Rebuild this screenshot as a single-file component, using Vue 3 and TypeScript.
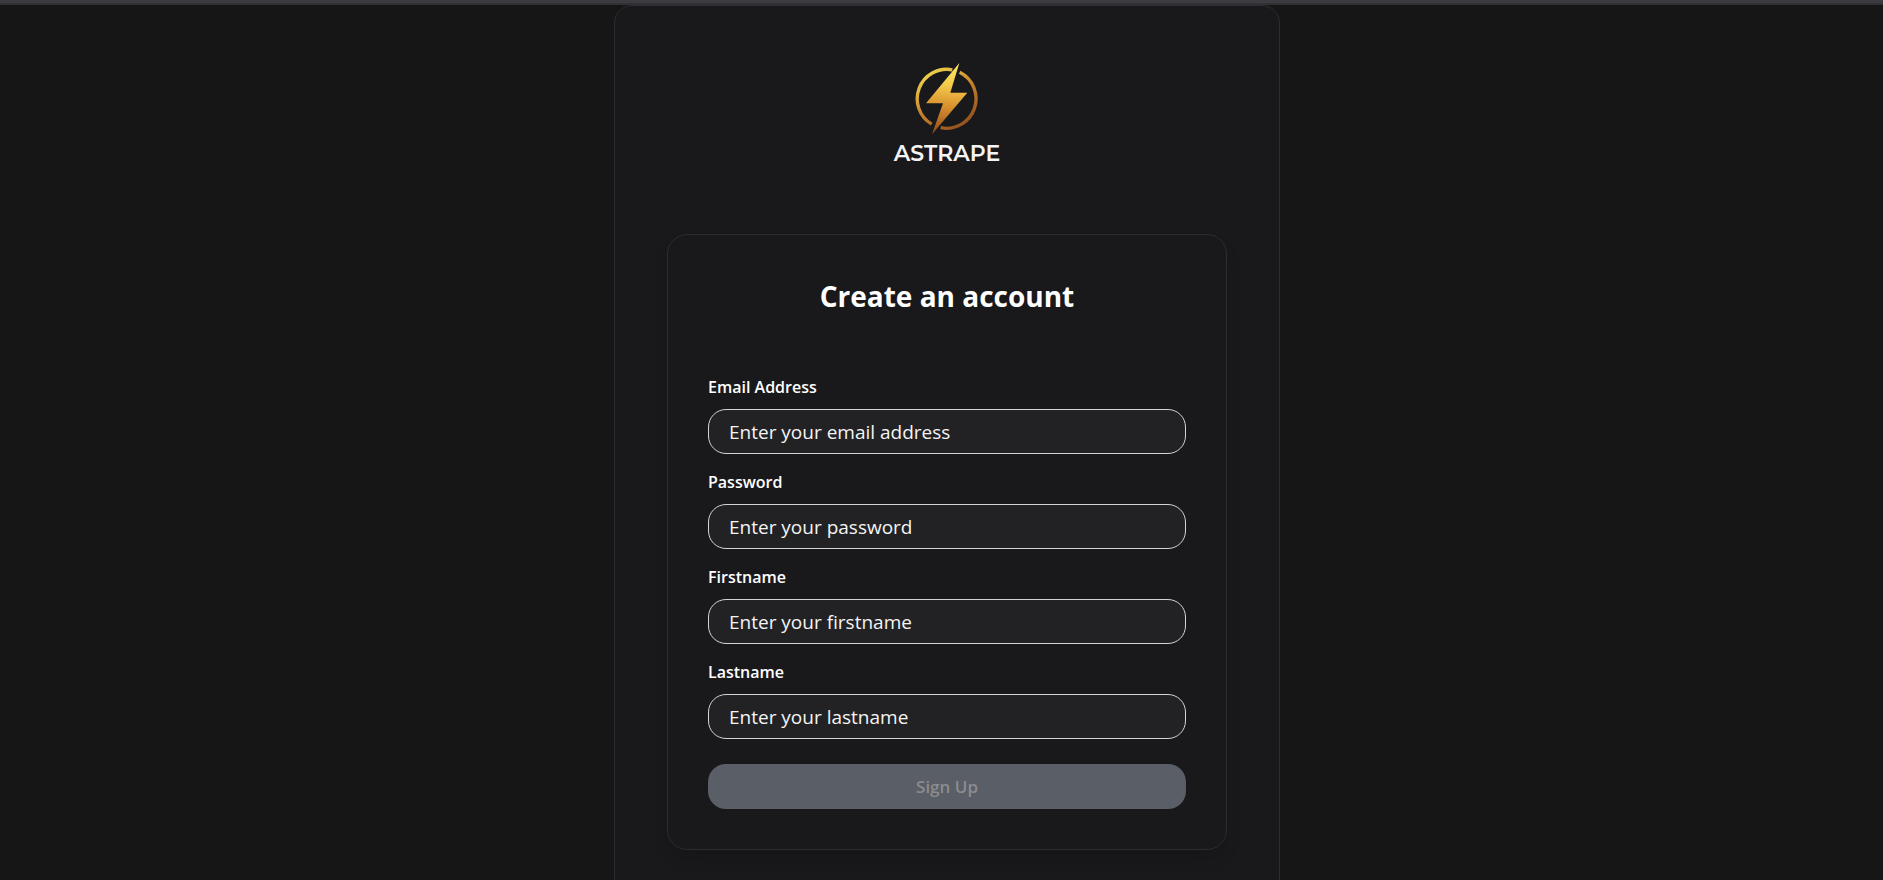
<script setup lang="ts">
import { computed, reactive } from 'vue'

type FieldName = 'email' | 'password' | 'firstname' | 'lastname'

interface Field {
  name: FieldName
  label: string
  type: string
  placeholder: string
}

const fields: Field[] = [
  { name: 'email', label: 'Email Address', type: 'email', placeholder: 'Enter your email address' },
  { name: 'password', label: 'Password', type: 'password', placeholder: 'Enter your password' },
  { name: 'firstname', label: 'Firstname', type: 'text', placeholder: 'Enter your firstname' },
  { name: 'lastname', label: 'Lastname', type: 'text', placeholder: 'Enter your lastname' },
]

const form = reactive<Record<FieldName, string>>({
  email: '',
  password: '',
  firstname: '',
  lastname: '',
})

const incomplete = computed(() => fields.some((field) => !form[field.name].trim()))
</script>

<template>
  <div class="page">
    <div class="topbar"></div>
    <div class="content">
      <main class="shell">
        <div class="brand">
          <svg class="mark" viewBox="0 0 192 216" aria-hidden="true">
            <defs>
              <linearGradient id="ring" gradientUnits="userSpaceOnUse" x1="40" y1="20" x2="150" y2="200">
                <stop offset="0" stop-color="#f3d84c" />
                <stop offset="0.45" stop-color="#c98630" />
                <stop offset="1" stop-color="#8f4a1c" />
              </linearGradient>
              <linearGradient id="bolt" gradientUnits="userSpaceOnUse" x1="110" y1="0" x2="90" y2="216">
                <stop offset="0" stop-color="#fbe765" />
                <stop offset="0.3" stop-color="#f5cb4b" />
                <stop offset="0.6" stop-color="#d8912f" />
                <stop offset="1" stop-color="#904a19" />
              </linearGradient>
            </defs>
            <g fill="none" stroke="url(#ring)" stroke-width="10">
              <path d="M112 20.5 A88.5 88.5 0 0 0 50 183.5" />
              <path d="M134 28 A88.5 88.5 0 0 1 77 194" />
            </g>
            <path d="M133 0 L33 121 H84 L51 214 L157 89 H106 Z" fill="url(#bolt)" />
          </svg>
          <span class="name">ASTRAPE</span>
        </div>

        <form class="card" @submit.prevent>
          <h1 class="title">Create an account</h1>
          <div v-for="field in fields" :key="field.name" class="field">
            <label class="label" :for="field.name">{{ field.label }}</label>
            <input
              :id="field.name"
              v-model="form[field.name]"
              class="input"
              :type="field.type"
              :name="field.name"
              :placeholder="field.placeholder"
            />
          </div>
          <button class="submit" type="submit" :disabled="incomplete">Sign Up</button>
        </form>
      </main>
    </div>
  </div>
</template>

<style>
body {
  margin: 0;
  background: #161616;
}
</style>

<style scoped>
.page {
  height: 100vh;
  overflow: hidden;
  display: flex;
  flex-direction: column;
  color: #fff;
  background: #161616;
  font-family: "Segoe UI", "Open Sans", "Noto Sans", sans-serif;
}

.topbar {
  flex: none;
  height: 3px;
  background: #3c3b40;
  border-bottom: 2px solid #313036;
}

.content {
  flex: 1 0 auto;
  display: flex;
  justify-content: center;
  padding-left: 11px;
}

.shell {
  box-sizing: border-box;
  width: 100%;
  max-width: 666px;
  padding: 57px 52px 80px;
  border: 1px solid #2d2d30;
  border-radius: 18px;
  background: #19191b;
}

.brand {
  display: flex;
  flex-direction: column;
  align-items: center;
}

.mark {
  width: 64px;
  height: 72px;
}

.name {
  margin-top: 5px;
  font-family: Montserrat, Inter, sans-serif;
  font-size: 22px;
  font-weight: 600;
  line-height: 28px;
  color: #f4f4f4;
}

.card {
  box-sizing: border-box;
  margin-top: 66px;
  padding: 40px;
  border: 1px solid #2d2d30;
  border-radius: 20px;
  background: #19191b;
  box-shadow: 0 10px 15px rgba(0, 0, 0, 0.1);
}

.title {
  margin: 0 0 56px;
  font-size: 28px;
  font-weight: 700;
  line-height: 42px;
  text-align: center;
}

.field {
  margin-bottom: 14px;
}

.label {
  display: block;
  margin-bottom: 8px;
  font-size: 16px;
  font-weight: 600;
  line-height: 28px;
}

.input,
.submit {
  display: block;
  box-sizing: border-box;
  width: 100%;
  height: 45px;
  border-radius: 18px;
  font-family: inherit;
}

.input {
  padding: 0 20px;
  border: 1px solid #d1d5db;
  color: #fff;
  background: #222224;
  font-size: 19px;
  outline: none;
}

.input::placeholder {
  color: #f4f4f4;
  opacity: 1;
}

.input:focus {
  border-color: #f3c94b;
}

.submit {
  margin-top: 25px;
  border: 0;
  color: #161616;
  background: #f3c94b;
  font-size: 17px;
  font-weight: 600;
}

.submit:disabled {
  color: #8c8c8e;
  background: #5a5e66;
}
</style>
